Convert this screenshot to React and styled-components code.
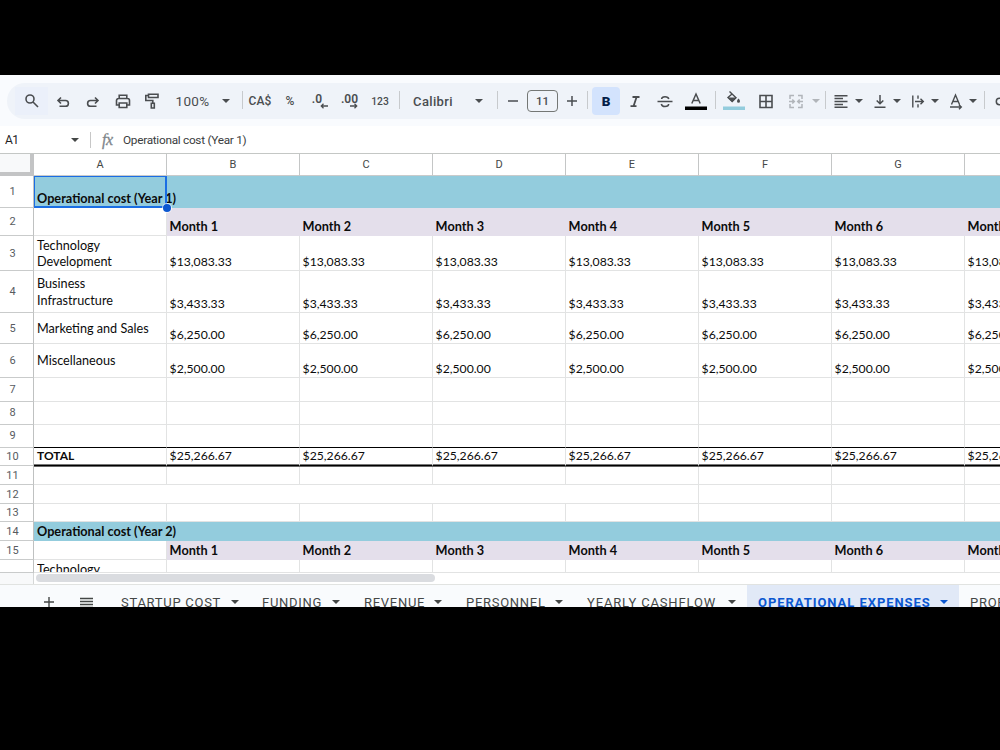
import React from "react";
import styled, { createGlobalStyle, css } from "styled-components";

const GlobalStyle = createGlobalStyle`
  * { box-sizing: border-box; }
  body { margin: 0; background: #000; overflow: hidden; }
`;

const ui = `Roboto, "Liberation Sans", sans-serif`;

const Screen = styled.div`
  width: 1000px;
  height: 750px;
  padding: 75px 0 143px;
  background: #000;
  font-family: ${ui};
  overflow: hidden;
`;
const Window = styled.main`
  display: flex;
  flex-direction: column;
  width: 1000px;
  height: 532px;
  background: #fff;
  overflow: hidden;
`;

/* Toolbar */
const ToolbarArea = styled.header`
  flex: none;
  height: 51px;
  padding: 8px 0 7px 7px;
  background: #f9fbfe;
`;
const Toolbar = styled.div`
  display: flex;
  align-items: center;
  height: 36px;
  padding-left: 8px;
  border-radius: 18px 0 0 18px;
  background: #eff3f9;
  overflow: hidden;
`;
const Tool = styled.div`
  flex: none;
  display: flex;
  align-items: center;
  justify-content: center;
  width: ${(p) => p.$w}px;
  height: 28px;
  margin-left: ${(p) => p.$ml || 0}px;
  color: ${(p) => (p.$dim ? "#b1b5ba" : "#4a4d50")};
  font-size: ${(p) => p.$size || 13}px;
  font-weight: ${(p) => p.$weight || 500};
  letter-spacing: ${(p) => p.$ls || 0}px;
  white-space: nowrap;
  svg { flex: none; display: block; overflow: visible; }
`;
const SearchTool = styled(Tool)`
  background: #ebf0fa;
`;
const BoldTool = styled(Tool)`
  border-radius: 4px;
  background: #d3e3fd;
  color: #041e49;
`;
const SizeBox = styled(Tool)`
  height: 22px;
  border: 1px solid #747775;
  border-radius: 4px;
`;
const Separator = styled.div`
  flex: none;
  width: 1px;
  height: 18px;
  margin: 0 0 2px ${(p) => p.$ml}px;
  background: #c7cacd;
`;
const DecimalLabel = styled.div`
  display: flex;
  flex-direction: column;
  align-items: flex-end;
  margin-right: ${(p) => p.$shift || 0}px;
  font-size: 12px;
  line-height: 12px;
  font-weight: 600;
  svg { margin: -2px ${(p) => -(p.$hang || 0)}px 0 0; }
`;

/* Formula bar */
const FormulaBar = styled.div`
  flex: none;
  display: flex;
  align-items: center;
  height: 27px;
  padding-left: 5px;
  color: #1f1f1f;
  font-size: 12px;
`;
const NameBox = styled.div`
  display: flex;
  align-items: center;
  justify-content: space-between;
  width: 74px;
  letter-spacing: -0.6px;
  svg { display: block; color: #444746; }
`;
const FormulaDivider = styled.div`
  width: 1px;
  height: 16px;
  margin: 0 11px;
  background: #c7c7c7;
`;
const Fx = styled.span`
  width: 21px;
  color: #80868b;
  font: italic 16px "Liberation Serif", serif;
  letter-spacing: -0.5px;
  -webkit-text-stroke: 0.3px #80868b;
`;
const FormulaText = styled.span`
  color: #3a3c3e;
  font-size: 11.8px;
  letter-spacing: -0.28px;
`;

/* Grid */
const Sheet = styled.section`
  flex: none;
  width: 1000px;
  height: 432px;
  border-top: 1px solid #c4c7c5;
  border-bottom: 1px solid #e1e3e1;
  overflow: hidden;
`;
const Row = styled.div`
  display: flex;
  width: 1100px;
  height: ${(p) => p.$h}px;
`;
const Corner = styled.div`
  flex: none;
  width: 34px;
  border-right: 4px solid #c3c4c5;
  border-bottom: 4px solid #c3c4c5;
  background: #f8f9fa;
`;
const ColumnHead = styled.div`
  flex: none;
  width: 133px;
  border-right: 1px solid #c4c6c6;
  border-bottom: 1px solid #c9cbcb;
  color: #444746;
  font-size: 11px;
  line-height: 21px;
  text-align: center;
`;
const RowHead = styled.div`
  flex: none;
  display: flex;
  align-items: center;
  justify-content: center;
  width: 34px;
  padding: 0 8px ${(p) => (p.$raised ? 1 : 0)}px 0;
  border-right: 1px solid #bfc1c1;
  border-bottom: 1px solid #c9cbcb;
  color: #575b5f;
  font-size: 11px;
`;
const tones = { blue: "#93ccdd", lilac: "#e4dfeb", plain: "#ffffff" };
const fontSize = (p) => {
  if (p.$total && p.$label) return 12;
  if (p.$bold) return 12.7;
  return p.$label ? 12.65 : 12.2;
};
const padBottom = (p) => ((p.$total && !p.$label) || (p.$bold && !p.$total) ? 1 : 0);
const Cell = styled.div`
  position: relative;
  flex: none;
  display: flex;
  flex-direction: column;
  justify-content: ${(p) => p.$align || "flex-end"};
  width: ${(p) => 133 * (p.$span || 1)}px;
  padding: ${(p) => (p.$label && !p.$total ? 2 : 0)}px 0 ${padBottom}px ${(p) => (p.$label || p.$over ? 3 : 2.6)}px;
  background: ${(p) => tones[p.$tone || "plain"]};
  border-right: ${(p) => (p.$tone ? "0" : "1px solid #e2e3e3")};
  border-bottom: ${(p) => (p.$tone ? "1px solid transparent" : "1px solid #e2e3e3")};
  color: #0b0b0b;
  font-family: Lato, sans-serif;
  font-size: ${fontSize}px;
  font-weight: ${(p) => (p.$bold ? 700 : 400)};
  line-height: 16.5px;
  white-space: pre;
  ${(p) => p.$over && css`z-index: 1; overflow: visible;`}
  ${(p) => p.$line && css`border-bottom-color: #000;`}
  ${(p) => p.$total && css`
    border-bottom-color: #000;
    box-shadow: 0 1px 0 #666, inset 0 -1px 0 #777;
    z-index: 1;
  `}
`;
const Selection = styled.div`
  position: absolute;
  inset: 0 0 -1px 0;
  border: 2px solid #1a6ee4;
  border-top-width: 1px;
  border-left-width: 1px;
`;
const FillHandle = styled.div`
  position: absolute;
  right: -4px;
  bottom: -5px;
  width: 8px;
  height: 8px;
  border-radius: 50%;
  background: #0b57d0;
  box-shadow: 0 0 0 1px rgba(255, 255, 255, 0.7);
`;
const ScrollStrip = styled.div`
  display: flex;
  height: 12px;
`;
const StripHead = styled.div`
  width: 34px;
  border-right: 1px solid #d5d7d7;
  background: #f8f9fa;
`;
const ScrollThumb = styled.div`
  width: 399px;
  height: 8px;
  margin: 1px 0 0 2px;
  border-radius: 4px;
  background: #dadce0;
`;

/* Sheet tabs */
const Tabs = styled.nav`
  flex: none;
  display: flex;
  height: 34px;
  background: #f9fbfd;
`;
const TabIcon = styled.div`
  flex: none;
  display: flex;
  justify-content: center;
  width: ${(p) => p.$w}px;
  padding-top: 12px;
  margin-left: ${(p) => p.$ml || 0}px;
  color: #444746;
  svg { display: block; }
`;
const TabDivider = styled.div`
  width: 1px;
  height: 20px;
  margin: 7px 1px 0 3px;
  background: #c7c7c7;
`;
const Tab = styled.div`
  flex: none;
  display: flex;
  align-items: flex-start;
  justify-content: space-between;
  width: ${(p) => p.$w}px;
  padding: 9px 11px 0 ${(p) => p.$pl || 12}px;
  color: ${(p) => (p.$active ? "#0b57d0" : "#444746")};
  background: ${(p) => (p.$active ? "#e1e9f7" : "transparent")};
  font-size: 13px;
  line-height: 17px;
  font-weight: ${(p) => (p.$active ? 700 : 400)};
  letter-spacing: ${(p) => p.$ls || 0.72}px;
  white-space: nowrap;
  svg { flex: none; display: block; margin-top: 6px; }
`;

const Caret = () => (
  <svg width="8" height="4" viewBox="0 0 8 4" fill="currentColor"><path d="M0 0h8L4 4z" /></svg>
);
const Icon = ({ children, w = 16, sw = 1.5, fill = "none" }) => (
  <svg width={w} height="16" viewBox={`0 0 ${w} 16`} fill={fill} stroke="currentColor" strokeWidth={sw}>{children}</svg>
);

const ToolbarItems = () => (
  <Toolbar>
    <SearchTool $w={33}><Icon sw={1.6}><circle cx="6" cy="6" r="4" /><path d="M9 9l5 5" /></Icon></SearchTool>
    <Tool $w={30}><Icon sw={1.6}><path d="M6 4.500L3 7.500l3 3M3.300 7.500H10.500a2.900 2.900 0 0 1 0 5.800H4.500" /></Icon></Tool>
    <Tool $w={29}><Icon sw={1.6}><path d="M10 4.500l3 3-3 3M12.700 7.500H5.500a2.900 2.900 0 0 0 0 5.800h6" /></Icon></Tool>
    <Tool $w={31}><Icon sw={1.6}><path d="M4.200 5V2.200h7.600V5M4 12H1.500V7.500a2 2 0 0 1 2-2h9a2 2 0 0 1 2 2V12H12M4.200 10h7.600v4.500H4.200z" /></Icon></Tool>
    <Tool $w={28}><Icon sw={1.6}><path d="M4.500 1.200h9.500v3.300H4.500zM4.500 2.500H1.800v5h7V10M7.300 10.300h3v4.700h-3z" /></Icon></Tool>
    <Tool $w={53} $ls={0.35} $weight={400} $size={13.5}>100%</Tool>
    <Tool $w={13}><Caret /></Tool>
    <Separator $ml={10} />
    <Tool $w={34} $size={12} $ls={0.15}>CA$</Tool>
    <Tool $w={26} $size={12}>%</Tool>
    <Tool $w={32}><DecimalLabel $shift={4} $hang={6}>.0<svg width="8" height="6" fill="none" stroke="currentColor" strokeWidth="1.3"><path d="M8 3H1.500M3.500 .8L1.300 3l2.200 2.200" /></svg></DecimalLabel></Tool>
    <Tool $w={30}><DecimalLabel $shift={1}>.00<svg width="8" height="6" fill="none" stroke="currentColor" strokeWidth="1.3"><path d="M0 3h6.500M4.500 .8L6.700 3 4.500 5.200" /></svg></DecimalLabel></Tool>
    <Tool $w={30} $size={10.3}>123</Tool>
    <Separator $ml={4} />
    <Tool $w={66} $ls={0.35} $size={13}>Calibri</Tool>
    <Tool $w={26}><Caret /></Tool>
    <Separator $ml={5} />
    <Tool $w={29}><Icon><path d="M3 8h10" /></Icon></Tool>
    <SizeBox $w={31} $size={11.5}>11</SizeBox>
    <Tool $w={28}><Icon><path d="M3 8h10M8 3v10" /></Icon></Tool>
    <Separator $ml={1} />
    <BoldTool $w={28} $ml={4} $size={13.5} $weight={900}>B</BoldTool>
    <Tool $w={30}><Icon sw={1.8}><path d="M5.500 4h7M3.500 13.200h6M9.600 4L6.600 13" /></Icon></Tool>
    <Tool $w={30}><Icon sw={1.5}><path d="M.5 8.500h15M11.800 6C11.400 4.300 10 3.700 8 3.700S4.700 4.500 4.600 6M4.300 11c.3 1.600 1.700 2.500 3.700 2.500s3.600-.9 3.700-2.500" /></Icon></Tool>
    <Tool $w={32}>
      <svg width="22" height="20" viewBox="0 0 22 20"><path d="M6.800 12.500L11 3l4.200 9.500M8.200 9.500h5.600" fill="none" stroke="currentColor" strokeWidth="1.500" /><path d="M0 15.500h22v3.500H0z" fill="#000" /></svg>
    </Tool>
    <Separator $ml={3} />
    <Tool $w={36}>
      <svg width="22" height="22" viewBox="0 0 22 22"><path d="M6.500 1.500l6.500 6.300-3.800 3.700L5 7.500 9 4" fill="none" stroke="currentColor" strokeWidth="1.400" /><path d="M4.700 7.500h8.600L9.200 12zM15.500 8.500c1 1.300 1.500 2 1.500 2.700a1.500 1.500 0 0 1-3 0c0-.7.5-1.400 1.500-2.700" fill="currentColor" /><path d="M0 16.500h22V20H0z" fill="#93ccdd" /></svg>
    </Tool>
    <Tool $w={28}><Icon sw={1.6}><path d="M2 2.500h12v12H2zM8 2.500v12M2 8.500h12" /></Icon></Tool>
    <Tool $w={32} $dim><Icon sw={1.5}><path d="M6 2.500H2V6M10 2.500h4V6M6 14.500H2V11M10 14.500h4V11M1 8.500h5M4.300 6.500l2 2-2 2M15 8.500h-5M11.700 6.500l-2 2 2 2" /></Icon></Tool>
    <Tool $w={7} $dim><Caret /></Tool>
    <Separator $ml={6} />
    <Tool $w={30}><Icon sw={1.5}><path d="M1.500 2.700h13M1.500 5.600h8.500M1.500 8.500h13M1.500 11.400h8.500M1.500 14.300h13" /></Icon></Tool>
    <Tool $w={5}><Caret /></Tool>
    <Tool $w={24} $ml={7}><Icon><path d="M8 2v8.500M4.700 7.500L8 10.800l3.300-3.300M2.500 14.300h11" /></Icon></Tool>
    <Tool $w={9}><Caret /></Tool>
    <Tool $w={28} $ml={3}><Icon sw={1.4}><path d="M2.800 2.500v12M8 2.500v3.300M8 11.200v3.300M5 8.500h8M10.500 5.700l2.800 2.800-2.800 2.800" /></Icon></Tool>
    <Tool $w={5}><Caret /></Tool>
    <Tool $w={28} $ml={5}><Icon sw={1.4}><path d="M3.500 11.500L7.500 2l4 9.500M4.800 8.500h5.400M2 14h11M11 11.700l2.300 2.300-2.300 2.300" /></Icon></Tool>
    <Tool $w={5}><Caret /></Tool>
    <Separator $ml={9} />
    <Tool $w={30} $ml={2}><Icon><path d="M7 5.300H5.500a3.200 3.200 0 0 0 0 6.400H7M6.500 8.500h6" /></Icon></Tool>
  </Toolbar>
);

const months = ["Month 1", "Month 2", "Month 3", "Month 4", "Month 5", "Month 6", "Month 7"];
const rows = [
  { n: 1, h: 32, kind: "title", label: "Operational cost (Year 1)", selected: true },
  { n: 2, h: 28, kind: "months" },
  { n: 3, h: 35, label: "Technology\nDevelopment", value: "$13,083.33" },
  { n: 4, h: 42, label: "Business\nInfrastructure", value: "$3,433.33" },
  { n: 5, h: 31, label: "Marketing and Sales", value: "$6,250.00" },
  { n: 6, h: 34, label: "Miscellaneous", value: "$2,500.00" },
  { n: 7, h: 24 },
  { n: 8, h: 23 },
  { n: 9, h: 23, line: true },
  { n: 10, h: 18, label: "TOTAL", value: "$25,266.67", total: true },
  { n: 11, h: 19 },
  { n: 12, h: 19, kind: "merged" },
  { n: 13, h: 18 },
  { n: 14, h: 19, kind: "title", label: "Operational cost (Year 2)" },
  { n: 15, h: 19, kind: "months" },
  { n: "", h: 13, label: "Technology", clipped: true },
];

const ClippedText = styled.div`
  height: 11px;
  overflow: hidden;
`;
const TitleText = styled.span`
  position: relative;
`;

const GridRow = ({ row }) => {
  const { kind, label, value, line, total, clipped, selected } = row;
  let cells;
  if (kind === "title") {
    cells = (
      <>
        <Cell $tone="blue" $bold $over>
          <TitleText>{label}</TitleText>
          {selected && <><Selection /><FillHandle /></>}
        </Cell>
        {months.map((m) => <Cell key={m} $tone="blue" />)}
      </>
    );
  } else if (kind === "months") {
    cells = (
      <>
        <Cell />
        {months.map((m) => <Cell key={m} $tone="lilac" $bold>{m}</Cell>)}
      </>
    );
  } else if (kind === "merged") {
    cells = (
      <>
        <Cell $span={5} />
        <Cell /><Cell /><Cell />
      </>
    );
  } else {
    cells = (
      <>
        <Cell $label $align={clipped ? "flex-start" : "center"} $bold={total} $line={line} $total={total}>
          {clipped ? <ClippedText>{label}</ClippedText> : label}
        </Cell>
        {months.map((m) => <Cell key={m} $line={line} $total={total}>{value}</Cell>)}
      </>
    );
  }
  return (
    <Row $h={row.h}>
      <RowHead $raised={row.n > 6 && row.n < 10}>{row.n}</RowHead>
      {cells}
    </Row>
  );
};

export default function App() {
  return (
    <Screen>
      <GlobalStyle />
      <Window>
        <ToolbarArea><ToolbarItems /></ToolbarArea>
        <FormulaBar>
          <NameBox>A1<Caret /></NameBox>
          <FormulaDivider />
          <Fx>fx</Fx>
          <FormulaText>Operational cost (Year 1)</FormulaText>
        </FormulaBar>
        <Sheet>
          <Row $h={22}>
            <Corner />
            {["A", "B", "C", "D", "E", "F", "G", "H"].map((c) => <ColumnHead key={c}>{c}</ColumnHead>)}
          </Row>
          {rows.map((row, i) => <GridRow key={i} row={row} />)}
          <ScrollStrip><StripHead /><ScrollThumb /></ScrollStrip>
        </Sheet>
        <Tabs>
          <TabIcon $w={38} $ml={30}>
            <svg width="10" height="10" stroke="currentColor" strokeWidth="1.4"><path d="M0 5h10M5 0v10" /></svg>
          </TabIcon>
          <TabIcon $w={37}>
            <svg width="13" height="11" stroke="currentColor" strokeWidth="1.3"><path d="M0 1.500h13M0 4.500h13M0 7.500h13M0 10.500h13" /></svg>
          </TabIcon>
          <TabDivider />
          <Tab $w={141}>STARTUP COST<Caret /></Tab>
          <Tab $w={101}>FUNDING<Caret /></Tab>
          <Tab $w={102} $pl={13}>REVENUE<Caret /></Tab>
          <Tab $w={121} $pl={13}>PERSONNEL<Caret /></Tab>
          <Tab $w={173} $pl={13} $ls={0.85}>YEARLY CASHFLOW<Caret /></Tab>
          <Tab $w={212} $pl={11} $ls={0.95} $active>OPERATIONAL EXPENSES<Caret /></Tab>
          <Tab $w={120} $pl={11}>PROFIT</Tab>
        </Tabs>
      </Window>
    </Screen>
  );
}
